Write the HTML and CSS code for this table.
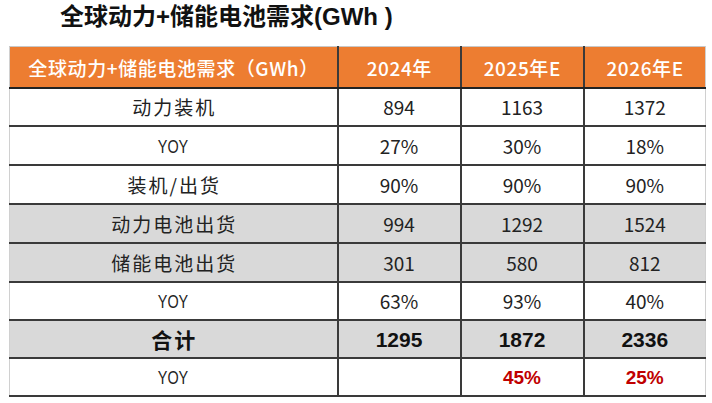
FILE: index.html
```html
<!DOCTYPE html>
<html lang="zh">
<head>
<meta charset="utf-8">
<title>全球动力+储能电池需求</title>
<link rel="stylesheet" href="styles.css">
</head>
<body>
<h1 class="title">全球动力+储能电池需求(GWh )</h1>
<table class="demand">
  <colgroup>
    <col class="c-name"><col class="c-val"><col class="c-val"><col class="c-last">
  </colgroup>
  <thead>
    <tr class="head">
      <th>全球动力+储能电池需求（GWh）</th>
      <th>2024年</th>
      <th>2025年E</th>
      <th>2026年E</th>
    </tr>
  </thead>
  <tbody>
    <tr class="row"><td class="cjk">动力装机</td><td>894</td><td>1163</td><td>1372</td></tr>
    <tr class="row tall"><td><span class="nar">YOY</span></td><td>27%</td><td>30%</td><td>18%</td></tr>
    <tr class="row tall"><td class="cjk">装机/出货</td><td>90%</td><td>90%</td><td>90%</td></tr>
    <tr class="row tall shade"><td class="cjk">动力电池出货</td><td>994</td><td>1292</td><td>1524</td></tr>
    <tr class="row tall shade"><td class="cjk">储能电池出货</td><td>301</td><td>580</td><td>812</td></tr>
    <tr class="row"><td><span class="nar">YOY</span></td><td>63%</td><td>93%</td><td>40%</td></tr>
    <tr class="row shade total"><td class="sum">合计</td><td><span class="bnum">1295</span></td><td><span class="bnum">1872</span></td><td><span class="bnum">2336</span></td></tr>
    <tr class="row last"><td><span class="nar">YOY</span></td><td></td><td><span class="red">45%</span></td><td><span class="red">25%</span></td></tr>
  </tbody>
</table>
</body>
</html>
```
FILE: styles.css
```css
html, body {
  margin: 0;
  padding: 0;
  background: #ffffff;
}
body {
  width: 712px;
  height: 403px;
  overflow: hidden;
  font-family: "Noto Sans CJK SC", "Noto Sans", sans-serif;
  color: #222;
}
.title {
  margin: 0;
  padding: 3px 0 0 60px;
  height: 46px;
  box-sizing: border-box;
  font-family: "Liberation Sans", "Noto Sans CJK SC", sans-serif;
  font-weight: bold;
  font-size: 24px;
  line-height: 28px;
  color: #111;
}
.demand {
  margin-left: 9px;
  border-collapse: collapse;
  table-layout: fixed;
  width: 696px;
}
.c-name { width: 328px; }
.c-val { width: 123px; }
.c-last { width: 122px; }
.demand th,
.demand td {
  text-align: center;
  padding: 0;
  border: 2px solid #3a3a3a;
}
.demand tr > :first-child { border-left: 1px solid #d0d0d0; }
.demand tr > :last-child { border-right: 1px solid #d0d0d0; }
.head th {
  height: 40px;
  background: #ed7d31;
  color: #fff;
  font-weight: 500;
  font-size: 19px;
  letter-spacing: 0.6px;
  padding-left: 0.6px;
  border-top: 1px solid #c8c8c8;
  border-bottom: 2px solid #222;
}
.head th + th { border-left: 2px solid #3a3a3a; }
.row td {
  height: 36px;
  font-size: 19px;
  line-height: 22px;
}
.row.tall td { height: 37px; }
.row td.cjk {
  letter-spacing: 2px;
  padding-left: 2px;
}
.shade td { background: #d9d9d9; }
.nar {
  display: inline-block;
  font-family: "Liberation Sans", sans-serif;
  font-size: 18px;
  transform: scaleX(0.8);
}
.total td.sum {
  font-weight: bold;
  font-size: 21px;
  letter-spacing: 2px;
  padding-left: 2px;
  color: #111;
}
.bnum {
  display: inline-block;
  font-family: "Liberation Sans", sans-serif;
  font-weight: bold;
  font-size: 21px;
  color: #111;
}
.red {
  display: inline-block;
  color: #c00000;
  font-weight: bold;
  font-family: "Liberation Sans", sans-serif;
  font-size: 19px;
}
```
